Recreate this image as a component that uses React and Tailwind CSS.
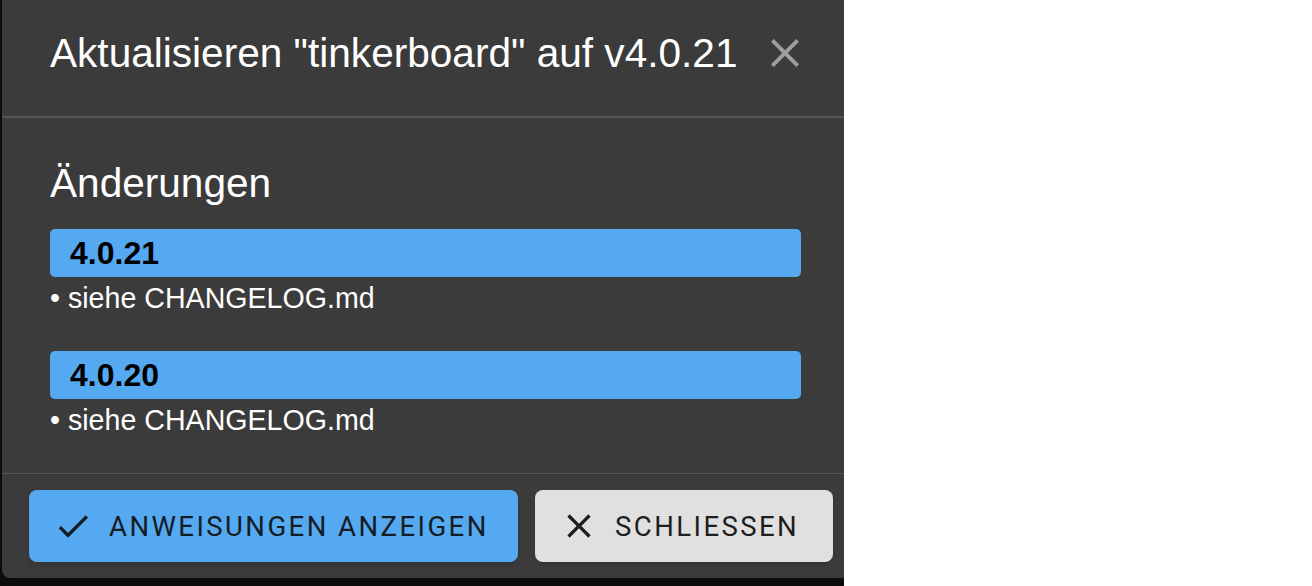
const CheckIcon = ({ className }) => (
  <svg viewBox="0 0 24 24" className={className} fill="currentColor">
    <path d="M9 16.17 4.83 12l-1.42 1.41L9 19 21 7l-1.41-1.41z" />
  </svg>
)

const CloseIcon = ({ className }) => (
  <svg viewBox="0 0 24 24" className={className} fill="currentColor">
    <path d="M19 6.41 17.59 5 12 10.59 6.41 5 5 6.41 10.59 12 5 17.59 6.41 19 12 13.41 17.59 19 19 17.59 13.41 12z" />
  </svg>
)

const releases = [
  { version: '4.0.21', notes: ['siehe CHANGELOG.md'] },
  { version: '4.0.20', notes: ['siehe CHANGELOG.md'] },
]

export default function App() {
  return (
    <div className="flex w-full h-[586px] bg-white font-['Liberation_Sans',Arial,sans-serif]">
      <div className="w-[844px] h-[586px] shrink-0 bg-[#0c0c0c] overflow-hidden">
        <div className="ml-[2px] w-[847px] h-[578px] bg-[#3b3b3b] rounded-b-[8px] flex flex-col">
          {/* header */}
          <div className="h-[117px] pl-[48px] pr-[40px] pt-[29px] flex justify-between items-start">
            <h2 className="text-[40.6px] leading-[48px] text-white">
              Aktualisieren "tinkerboard" auf v4.0.21
            </h2>
            <button className="text-[#9e9e9e]">
              <CloseIcon className="w-[48px] h-[48px]" />
            </button>
          </div>
          <div className="h-[2px] bg-[#555555]" />

          {/* changelog */}
          <div className="flex-1 px-[48px] pt-[41px]">
            <h3 className="text-[40.6px] leading-[48px] text-white mb-[22px]">Änderungen</h3>
            {releases.map((r) => (
              <div key={r.version} className="mb-[36px]">
                <div className="h-[48px] bg-[#55a9f1] rounded-[5px] pl-[20px] text-[32px] leading-[48px] font-bold text-black">
                  {r.version}
                </div>
                {r.notes.map((n) => (
                  <div key={n} className="pt-[4px] text-[28.6px] leading-[34px] text-white">
                    • {n}
                  </div>
                ))}
              </div>
            ))}
          </div>
          <div className="h-[2px] bg-[#555555]" />

          {/* actions */}
          <div className="h-[105px] pl-[27px] pt-[16px] flex gap-[17px] font-['Roboto',sans-serif]">
            <button className="w-[489px] h-[72px] rounded-[8px] bg-[#55a9f1] shadow-md flex items-center pl-[24px] text-[#141c24]">
              <CheckIcon className="w-[40px] h-[40px] mr-[16px]" />
              <span className="text-[27.5px] tracking-[2.45px] uppercase">Anweisungen anzeigen</span>
            </button>
            <button className="w-[298px] h-[72px] rounded-[8px] bg-[#e0e0e0] shadow-md flex items-center pl-[24px] text-[#1e1e1e]">
              <CloseIcon className="w-[40px] h-[40px] mr-[16px]" />
              <span className="text-[27.5px] tracking-[2.45px] uppercase">Schliessen</span>
            </button>
          </div>
        </div>
      </div>
    </div>
  )
}
